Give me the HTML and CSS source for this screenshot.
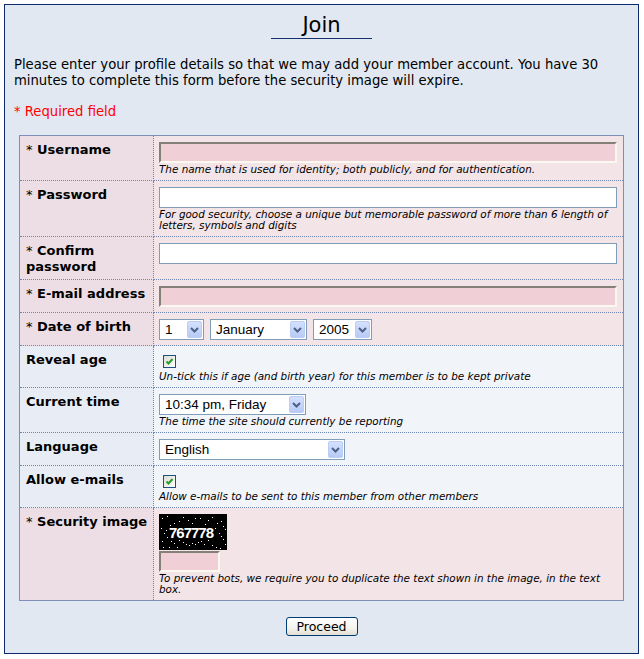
FILE: index.html
```html
<!DOCTYPE html>
<html lang="en">
<head>
<meta charset="utf-8">
<title>Join</title>
<link rel="stylesheet" href="styles.css">
</head>
<body>
<div class="box">
  <h1 class="title"><span>Join</span></h1>
  <p class="intro">Please enter your profile details so that we may add your member account. You have 30 minutes to complete this form before the security image will expire.</p>
  <p class="req">* Required field</p>
  <form class="form">
    <table class="fields">
      <colgroup><col class="col-label"><col></colgroup>
      <tr class="required">
        <th><span class="star">*</span> Username</th>
        <td><input class="text inset" type="text"><div class="desc">The name that is used for identity; both publicly, and for authentication.</div></td>
      </tr>
      <tr class="required">
        <th><span class="star">*</span> Password</th>
        <td><input class="text plain" type="password"><div class="desc">For good security, choose a unique but memorable password of more than 6 length of letters, symbols and digits</div></td>
      </tr>
      <tr class="required">
        <th><span class="star">*</span> Confirm password</th>
        <td><input class="text plain" type="password"></td>
      </tr>
      <tr class="required">
        <th><span class="star">*</span> E-mail address</th>
        <td><input class="text inset" type="text"></td>
      </tr>
      <tr class="required">
        <th><span class="star">*</span> Date of birth</th>
        <td>
          <div class="selects">
            <div class="select w-day"><span class="sel-text">1</span><span class="sel-btn"><svg width="9" height="6" viewBox="0 0 9 6"><path d="M1 1 L4.5 4.5 L8 1" stroke="#4d6185" stroke-width="2" fill="none"/></svg></span></div>
            <div class="select w-month"><span class="sel-text">January</span><span class="sel-btn"><svg width="9" height="6" viewBox="0 0 9 6"><path d="M1 1 L4.5 4.5 L8 1" stroke="#4d6185" stroke-width="2" fill="none"/></svg></span></div>
            <div class="select w-year"><span class="sel-text">2005</span><span class="sel-btn"><svg width="9" height="6" viewBox="0 0 9 6"><path d="M1 1 L4.5 4.5 L8 1" stroke="#4d6185" stroke-width="2" fill="none"/></svg></span></div>
          </div>
        </td>
      </tr>
      <tr class="optional">
        <th>Reveal age</th>
        <td><span class="check"><svg width="11" height="11" viewBox="0 0 11 11"><path d="M2.5 5.5 L4.5 7.5 L8.5 3" stroke="#21a121" stroke-width="2" fill="none"/></svg></span><div class="desc">Un-tick this if age (and birth year) for this member is to be kept private</div></td>
      </tr>
      <tr class="optional">
        <th>Current time</th>
        <td><div class="select w-time"><span class="sel-text">10:34 pm, Friday</span><span class="sel-btn"><svg width="9" height="6" viewBox="0 0 9 6"><path d="M1 1 L4.5 4.5 L8 1" stroke="#4d6185" stroke-width="2" fill="none"/></svg></span></div><div class="desc">The time the site should currently be reporting</div></td>
      </tr>
      <tr class="optional">
        <th>Language</th>
        <td><div class="select w-lang"><span class="sel-text">English</span><span class="sel-btn"><svg width="9" height="6" viewBox="0 0 9 6"><path d="M1 1 L4.5 4.5 L8 1" stroke="#4d6185" stroke-width="2" fill="none"/></svg></span></div></td>
      </tr>
      <tr class="optional">
        <th>Allow e-mails</th>
        <td><span class="check"><svg width="11" height="11" viewBox="0 0 11 11"><path d="M2.5 5.5 L4.5 7.5 L8.5 3" stroke="#21a121" stroke-width="2" fill="none"/></svg></span><div class="desc">Allow e-mails to be sent to this member from other members</div></td>
      </tr>
      <tr class="required">
        <th><span class="star">*</span> Security image</th>
        <td>
          <svg class="captcha" width="68" height="36" viewBox="0 0 68 36">
            <rect width="68" height="36" fill="#000"/>
            <g fill="#fff">
              <rect x="3" y="4" width="1" height="1"/><rect x="8" y="2" width="1" height="1"/><rect x="24" y="3" width="1" height="1"/>
              <rect x="29" y="6" width="1" height="1"/><rect x="36" y="4" width="1" height="1"/><rect x="41" y="4" width="1" height="1"/>
              <rect x="49" y="6" width="1" height="1"/><rect x="53" y="3" width="1" height="1"/><rect x="58" y="9" width="1" height="1"/>
              <rect x="62" y="7" width="1" height="1"/><rect x="64" y="12" width="1" height="1"/><rect x="66" y="15" width="1" height="1"/>
              <rect x="2" y="14" width="1" height="1"/><rect x="5" y="19" width="1" height="1"/><rect x="8" y="23" width="1" height="1"/>
              <rect x="3" y="27" width="1" height="1"/><rect x="12" y="27" width="1" height="1"/><rect x="15" y="29" width="1" height="1"/>
              <rect x="20" y="26" width="1" height="1"/><rect x="24" y="28" width="1" height="1"/><rect x="27" y="30" width="1" height="1"/>
              <rect x="30" y="31" width="1" height="1"/><rect x="33" y="29" width="1" height="1"/><rect x="36" y="30" width="1" height="1"/>
              <rect x="39" y="28" width="1" height="1"/><rect x="42" y="27" width="1" height="1"/><rect x="45" y="30" width="1" height="1"/>
              <rect x="49" y="26" width="1" height="1"/><rect x="53" y="31" width="1" height="1"/><rect x="57" y="33" width="1" height="1"/>
              <rect x="61" y="34" width="1" height="1"/><rect x="18" y="33" width="1" height="1"/><rect x="10" y="33" width="1" height="1"/>
              <rect x="64" y="25" width="1" height="1"/><rect x="66" y="30" width="1" height="1"/><rect x="4" y="33" width="1" height="1"/>
              <rect x="11" y="11" width="1" height="1"/><rect x="15" y="9" width="1" height="1"/><rect x="56" y="14" width="1" height="1"/>
              <rect x="60" y="19" width="1" height="1"/><rect x="62" y="22" width="1" height="1"/><rect x="33" y="9" width="1" height="1"/>
              <rect x="46" y="10" width="1" height="1"/><rect x="20" y="7" width="1" height="1"/><rect x="7" y="16" width="1" height="1"/>
            </g>
            <text x="10" y="24" fill="#fff" font-family="Liberation Sans, Arial, sans-serif" font-weight="bold" font-size="15" letter-spacing="-1">767778</text>
          </svg>
          <input class="text inset code" type="text">
          <div class="desc">To prevent bots, we require you to duplicate the text shown in the image, in the text box.</div>
        </td>
      </tr>
    </table>
    <div class="actions"><button type="button" class="btn">Proceed</button></div>
  </form>
</div>
</body>
</html>
```

FILE: styles.css
```css
* { box-sizing: border-box; }

body {
  margin: 4px 5px 5px 4px;
  background: #ffffff;
  font-family: "DejaVu Sans", Verdana, sans-serif;
  color: #000;
}

.box {
  border: 1px solid #0e2a6a;
  background: #e1e8f1;
  padding: 7px 9px 17px;
}

.title {
  margin: 0;
  text-align: center;
  font-size: 21px;
  font-weight: normal;
  line-height: 26px;
}

.title span {
  display: inline-block;
  padding: 0 31px;
  border-bottom: 1px solid #16306c;
}

.intro {
  margin: 18px 0 0;
  font-size: 13.2px;
  line-height: 16px;
}

.req {
  margin: 15px 0 0;
  font-size: 13.2px;
  line-height: 16px;
  color: #ff0000;
}

.fields {
  margin: 15px 5px 0;
  width: calc(100% - 10px);
  border-collapse: collapse;
  table-layout: fixed;
  border: 1px solid #7d8fb6;
}

.col-label { width: 134px; }

.fields th {
  text-align: left;
  vertical-align: top;
  font-size: 13px;
  line-height: 16px;
  font-weight: bold;
  padding: 6px 2px 4px 6px;
  border: 1px dotted #6e85b3;
}

.star { font-weight: normal; }

.fields td {
  vertical-align: top;
  padding: 6px 6px 5px 5px;
  border: 1px dotted #6e85b3;
}

tr.required th { background: #ecdee4; }
tr.required td { background: #f3e4e7; }
tr.optional th { background: #e8ecf4; }
tr.optional td { background: #f1f4f9; }

.text {
  display: block;
  width: 100%;
  margin: 0;
  font: 13px "Liberation Sans", Arial, sans-serif;
}

.plain {
  height: 21px;
  border: 1px solid #7f9db9;
  background: #ffffff;
}

.inset {
  height: 21px;
  background: #f0cfd6;
  border-style: solid;
  border-width: 2px;
  border-color: #848078 #fbf8f0 #fbf8f0 #848078;
}

.code { width: 61px; }

.desc {
  padding-top: 1px;
  font-size: 10.4px;
  font-style: italic;
  line-height: 11px;
}

.selects {
  display: flex;
  gap: 6px;
}

.select {
  display: flex;
  align-items: center;
  height: 21px;
  border: 1px solid #7f9db9;
  background: #fff;
  padding: 1px;
  font: 13.5px "Liberation Sans", Arial, sans-serif;
}

.sel-text {
  flex: 1;
  padding-left: 4px;
  white-space: nowrap;
  overflow: hidden;
}

.sel-btn {
  display: flex;
  align-items: center;
  justify-content: center;
  width: 15px;
  height: 17px;
  border: 1px solid #bccdf5;
  border-radius: 2px;
  background: linear-gradient(#d4e0fd, #b7cbf6);
}

.w-day { width: 45px; }
.w-month { width: 97px; }
.w-year { width: 59px; }
.w-time { width: 147px; }
.w-lang { width: 186px; }

.check {
  display: flex;
  align-items: center;
  justify-content: center;
  width: 13px;
  height: 13px;
  margin: 3px 3px 2px 4px;
  border: 1px solid #1c5180;
  background: linear-gradient(135deg, #dcdcd7, #ffffff);
}

.captcha {
  display: block;
  margin-bottom: 1px;
}

.actions {
  margin-top: 15px;
  text-align: center;
}

.btn {
  width: 72px;
  height: 19px;
  padding: 0;
  font: 12.5px "DejaVu Sans", Tahoma, sans-serif;
  color: #000;
  border: 1px solid #003c74;
  border-radius: 3px;
  background: linear-gradient(#ffffff, #f4f3ee 60%, #e2dfd2);
}
```
